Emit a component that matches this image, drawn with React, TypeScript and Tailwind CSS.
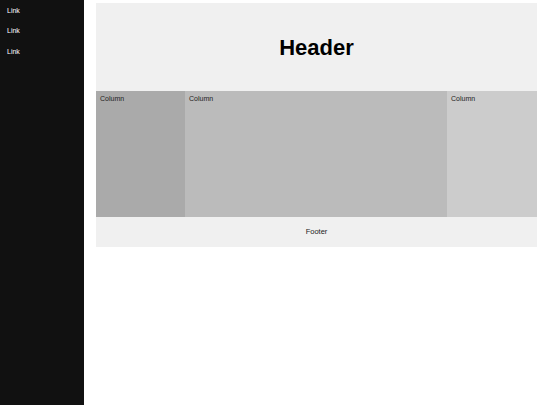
const links = ['Link', 'Link', 'Link'];

export default function App() {
  return (
    <div className="flex h-[405px] w-[540px] bg-white font-['Liberation_Sans',Arial,sans-serif]">
      <nav className="w-[84px] shrink-0 bg-[#111111] pl-[7px]">
        {links.map((label, i) => (
          <a
            key={i}
            href="#"
            className="-mt-[0.5px] block text-[7px] leading-[21px] text-white"
          >
            {label}
          </a>
        ))}
      </nav>

      <main className="flex-1 pt-[3px] pr-[3px] pl-[12px]">
        <header className="flex h-[88px] items-center justify-center bg-[#f0f0f0]">
          <h1 className="text-[22px] font-bold text-black">Header</h1>
        </header>

        <div className="grid h-[126px] grid-cols-[89px_262px_1fr] text-[7px] text-[#222]">
          <div className="bg-[#aaaaaa] px-[4px] pt-[3px]">Column</div>
          <div className="bg-[#bbbbbb] px-[4px] pt-[3px]">Column</div>
          <div className="bg-[#cccccc] px-[4px] pt-[3px]">Column</div>
        </div>

        <footer className="flex h-[30px] items-center justify-center bg-[#f0f0f0] text-[7.5px] text-[#222]">
          Footer
        </footer>
      </main>
    </div>
  );
}
